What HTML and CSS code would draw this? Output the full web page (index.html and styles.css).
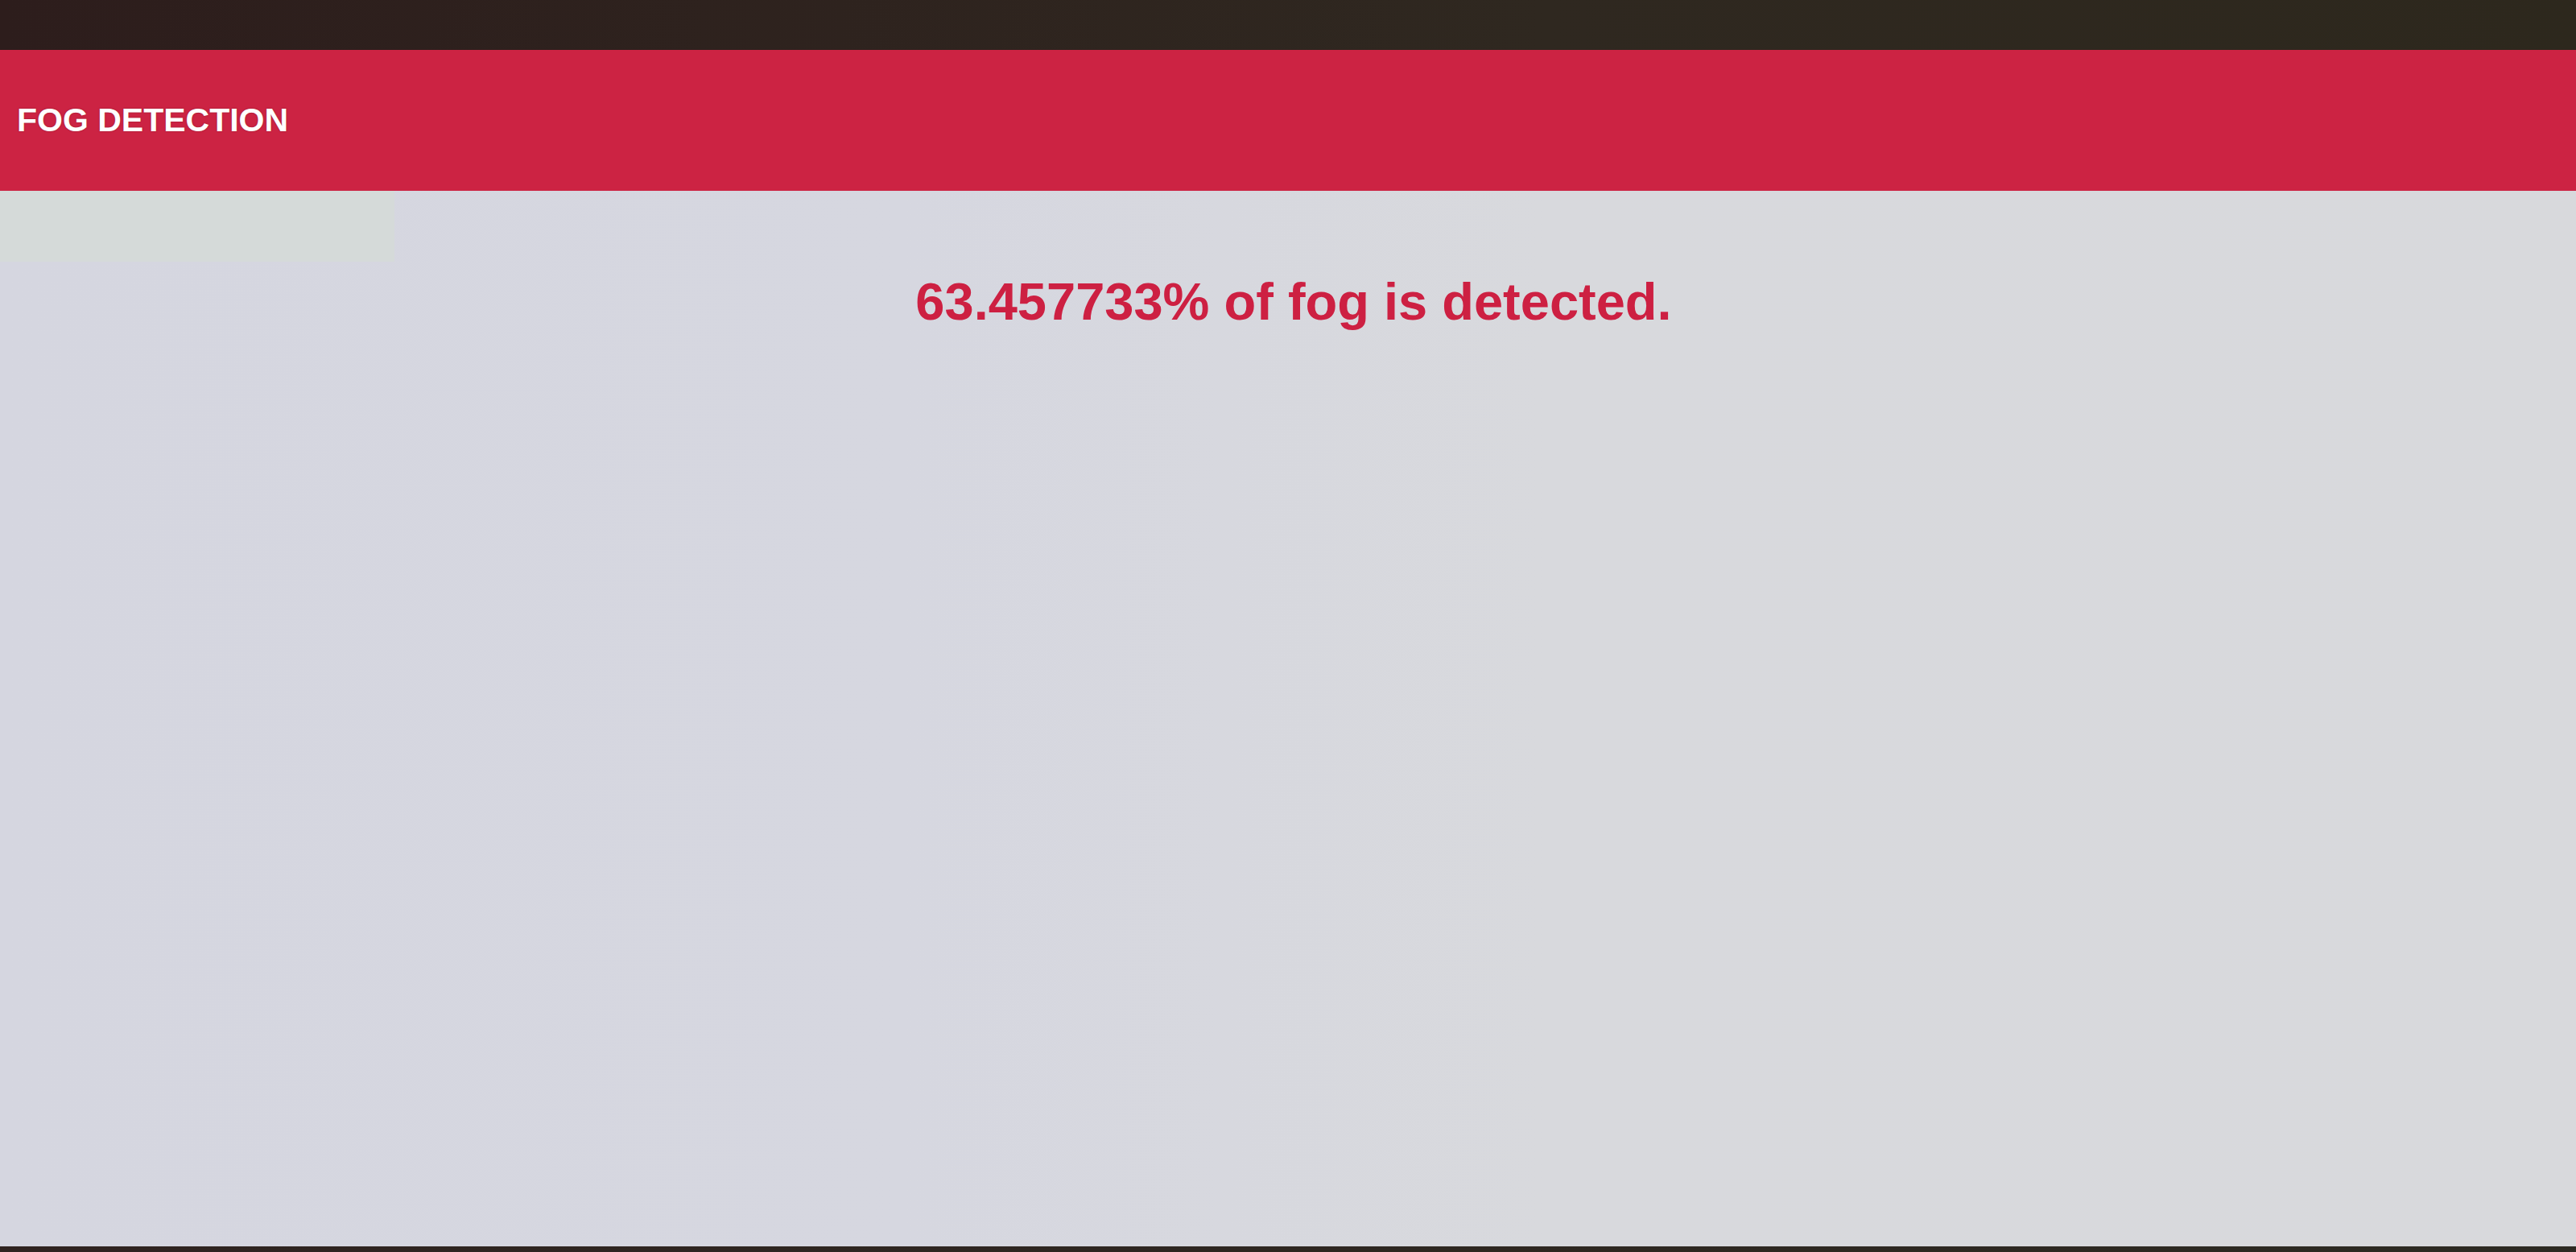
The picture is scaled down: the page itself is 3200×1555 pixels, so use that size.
FILE: index.html
```html
<!DOCTYPE html>
<html lang="en">
<head>
    <meta charset="UTF-8">
    <meta name="viewport" content="width=device-width, initial-scale=1.0">
    <title>Fog Detection</title>
    <link rel="stylesheet" href="styles.css">
</head>
<body>
    <div class="top-strip"></div>
    <header class="navbar">
        <span class="brand">FOG DETECTION</span>
    </header>
    <main class="content">
        <h2 class="result">63.457733% of fog is detected.</h2>
    </main>
    <div class="bottom-strip"></div>
</body>
</html>
```

FILE: styles.css
```css
body {
    font-family: "Liberation Sans", Arial, sans-serif;
    margin: 0;
    height: 100vh;
    display: flex;
    flex-direction: column;
    background: #d7d8dd;
}
.top-strip {
    height: 62px;
    background: linear-gradient(to right, #2d1d1c, #2f2820 60%, #2d281d);
}
.navbar {
    height: 175px;
    background-color: #cc2343;
    display: flex;
    align-items: center;
    padding-left: 21px;
    box-shadow: 0 1px 2px rgba(120, 20, 40, 0.35);
}
.brand {
    color: #ffffff;
    font-size: 41px;
    font-weight: bold;
    text-shadow: 0 0 2px rgba(90, 20, 30, 0.5);
}
.content {
    flex: 1;
    background:
        linear-gradient(to bottom, #d5dad9 0, #d5dad9 88px, transparent 88px) left top / 490px 100% no-repeat,
        linear-gradient(to right, #d5d6e0 0, #d6d7e0 35%, #d8d9dd 60%, #d8d9dc 100%);
    text-align: center;
}
.result {
    margin: 100px 0 0 14px;
    font-size: 65px;
    line-height: 75px;
    font-weight: bold;
    color: #cd2042;
}
.bottom-strip {
    height: 7px;
    background: linear-gradient(to right, #2f2320, #2d2a22);
}
```
